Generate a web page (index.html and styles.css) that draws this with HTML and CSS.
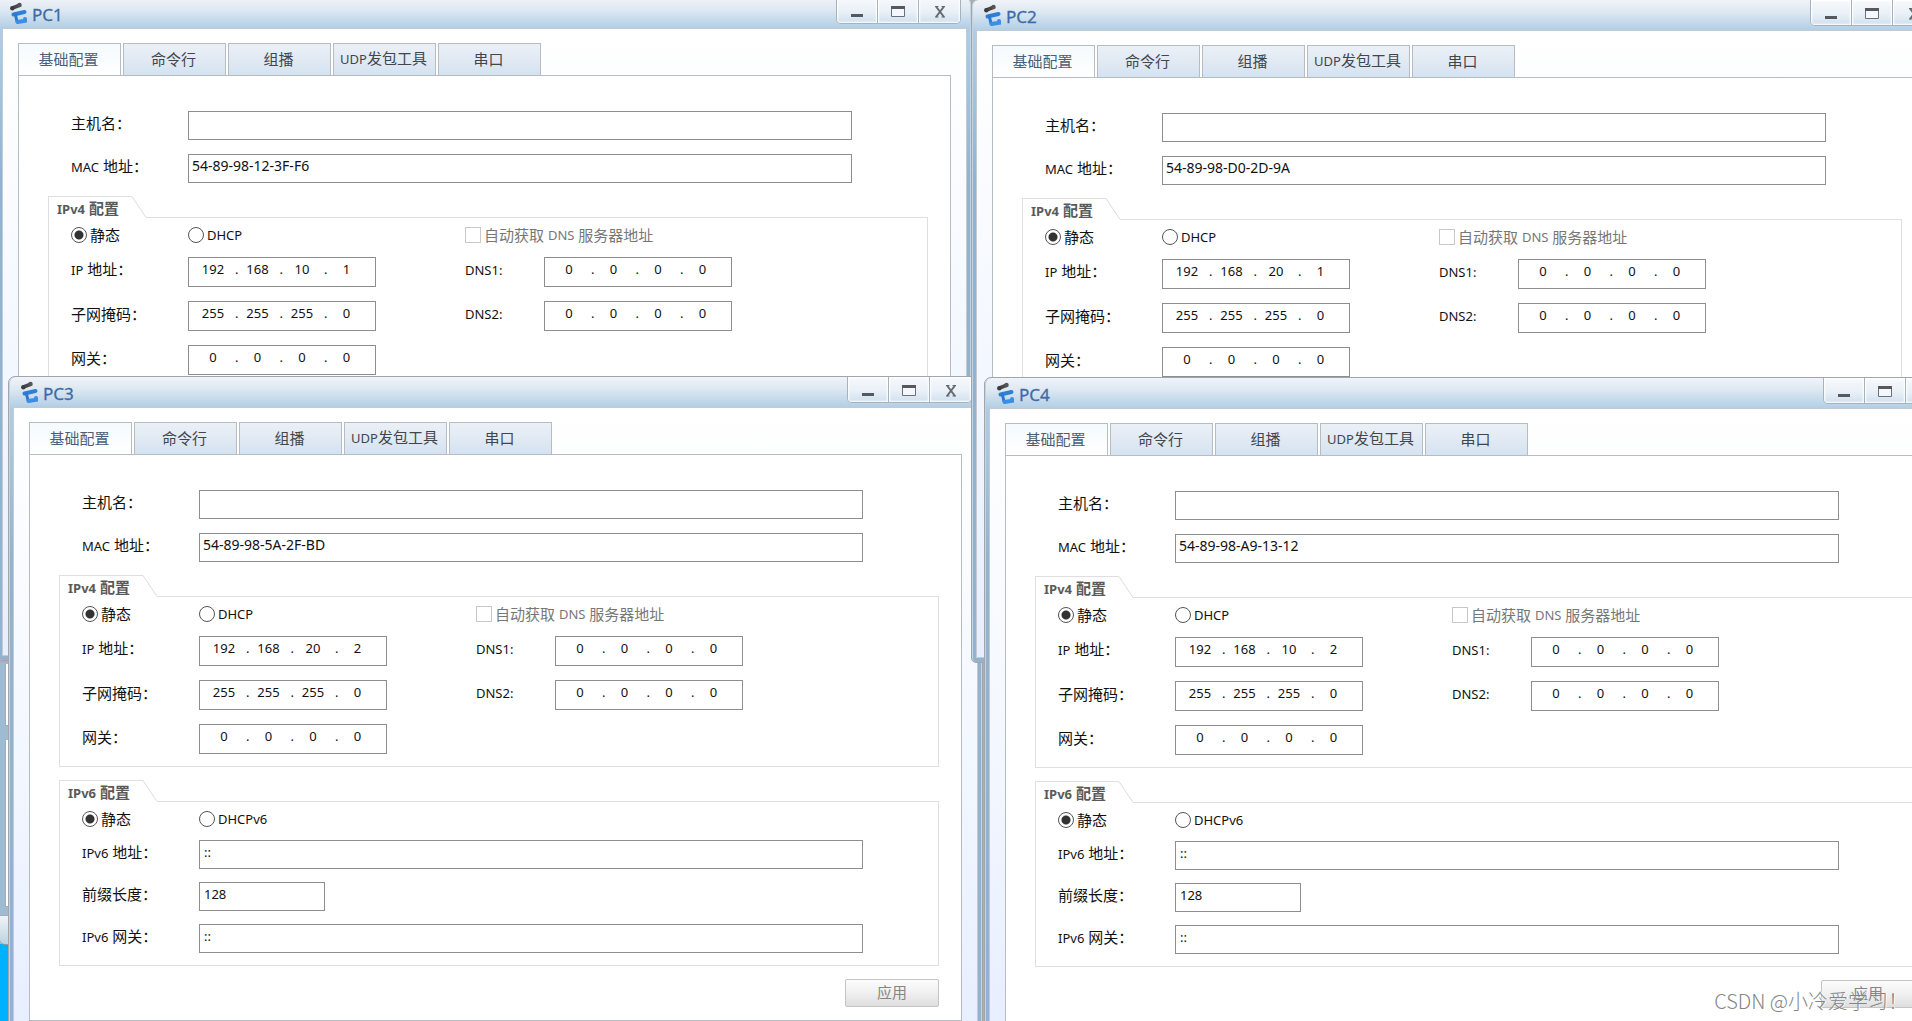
FILE: index.html
```html
<!DOCTYPE html>
<html lang="zh-CN">
<head>
<meta charset="utf-8">
<title>PC</title>
<link rel="stylesheet" href="styles.css">
</head>
<body>
<svg class="defs" aria-hidden="true">
  <symbol id="logo" viewBox="0 0 20 23">
    <g fill="none" stroke-linecap="round">
      <path d="M3.500 6 L10.500 3.300" stroke="#484848" stroke-width="3.600"/>
      <circle cx="3.300" cy="6.300" r="2.200" fill="#3c3c3c"/>
      <circle cx="10.500" cy="3" r="2.200" fill="#555"/>
      <path d="M4.500 12.500 L15.500 10" stroke="#2f7fd6" stroke-width="4"/>
      <path d="M6.500 13 L8 19.500" stroke="#2a78cf" stroke-width="3"/>
      <path d="M8.500 20 L16 18.800 L16 17" stroke="#3a8ee6" stroke-width="4"/>
    </g>
  </symbol>
  <symbol id="slope" viewBox="0 0 14 22"><path d="M0 .5 L14 21.500" fill="none" stroke="#dcdcdc"/></symbol>
  <symbol id="min" viewBox="0 0 14 14"><path d="M1 9h12v3H1z" fill="#55585e"/></symbol>
  <symbol id="max" viewBox="0 0 14 14"><path d="M.5 1.500h13v10H.5z" fill="#f4f8fc" stroke="#6c7076"/><path d="M0 1h14v3H0z" fill="#55585e"/></symbol>
  <symbol id="close" viewBox="0 0 14 14"><path d="M3 1.500L11 12M11 1.500L3 12" stroke="#66696e" stroke-width="2"/><path d="M2 1.500h3.500M8.500 1.500H12M2 12h3.500M8.500 12H12" stroke="#66696e"/></symbol>
</svg>
<main class="desktop">
  <div class="back"><div class="back-pane"></div><div class="back-pane back-pane-tall"></div><div class="back-foot"></div></div>

  <section class="window pc1" aria-label="PC1">
    <header class="titlebar">
      <svg class="logo"><use href="#logo"/></svg><h2 class="title">PC1</h2>
      <div class="controls"><button aria-label="最小化"><svg><use href="#min"/></svg></button><button aria-label="最大化"><svg><use href="#max"/></svg></button><button aria-label="关闭"><svg><use href="#close"/></svg></button></div>
    </header>
    <div class="client">
      <nav class="tabs"><button class="tab active">基础配置</button><button class="tab">命令行</button><button class="tab">组播</button><button class="tab"><span class="latin">UDP</span>发包工具</button><button class="tab">串口</button></nav>
      <div class="panel">
        <div class="field top"><label for="h1">主机名：</label><input id="h1" class="box" type="text"></div>
        <div class="field top"><label for="m1"><span class="latin">MAC</span> 地址：</label><input id="m1" class="box" type="text" value="54-89-98-12-3F-F6"></div>
        <fieldset class="group">
          <legend class="group-head"><span class="group-tab"><span class="latin">IPv4</span> 配置</span><svg class="slope"><use href="#slope"/></svg><span class="group-line"></span></legend>
          <div class="group-body">
            <div class="grid radios"><label class="choice"><input type="radio" name="v4-1" checked>静态</label><label class="choice"><input type="radio" name="v4-1"><span class="latin">DHCP</span></label><label class="choice auto"><input type="checkbox" disabled>自动获取 <span class="latin">DNS</span> 服务器地址</label></div>
            <div class="grid"><label for="ip1"><span class="latin">IP</span> 地址：</label><div class="box ip"><input id="ip1" value="192">.<input aria-label="IP 2" value="168">.<input aria-label="IP 3" value="10">.<input aria-label="IP 4" value="1"></div><label for="da1" class="latin">DNS1:</label><div class="box ip"><input id="da1" value="0">.<input aria-label="DNS1 2" value="0">.<input aria-label="DNS1 3" value="0">.<input aria-label="DNS1 4" value="0"></div></div>
            <div class="grid"><label for="mk1">子网掩码：</label><div class="box ip"><input id="mk1" value="255">.<input aria-label="掩码 2" value="255">.<input aria-label="掩码 3" value="255">.<input aria-label="掩码 4" value="0"></div><label for="db1" class="latin">DNS2:</label><div class="box ip"><input id="db1" value="0">.<input aria-label="DNS2 2" value="0">.<input aria-label="DNS2 3" value="0">.<input aria-label="DNS2 4" value="0"></div></div>
            <div class="grid"><label for="gw1">网关：</label><div class="box ip"><input id="gw1" value="0">.<input aria-label="网关 2" value="0">.<input aria-label="网关 3" value="0">.<input aria-label="网关 4" value="0"></div></div>
          </div>
        </fieldset>
      </div>
    </div>
  </section>

  <section class="window pc3" aria-label="PC3">
    <header class="titlebar">
      <svg class="logo"><use href="#logo"/></svg><h2 class="title">PC3</h2>
      <div class="controls"><button aria-label="最小化"><svg><use href="#min"/></svg></button><button aria-label="最大化"><svg><use href="#max"/></svg></button><button aria-label="关闭"><svg><use href="#close"/></svg></button></div>
    </header>
    <div class="client">
      <nav class="tabs"><button class="tab active">基础配置</button><button class="tab">命令行</button><button class="tab">组播</button><button class="tab"><span class="latin">UDP</span>发包工具</button><button class="tab">串口</button></nav>
      <div class="panel">
        <div class="field top"><label for="h3">主机名：</label><input id="h3" class="box" type="text"></div>
        <div class="field top"><label for="m3"><span class="latin">MAC</span> 地址：</label><input id="m3" class="box" type="text" value="54-89-98-5A-2F-BD"></div>
        <fieldset class="group">
          <legend class="group-head"><span class="group-tab"><span class="latin">IPv4</span> 配置</span><svg class="slope"><use href="#slope"/></svg><span class="group-line"></span></legend>
          <div class="group-body">
            <div class="grid radios"><label class="choice"><input type="radio" name="v4-3" checked>静态</label><label class="choice"><input type="radio" name="v4-3"><span class="latin">DHCP</span></label><label class="choice auto"><input type="checkbox" disabled>自动获取 <span class="latin">DNS</span> 服务器地址</label></div>
            <div class="grid"><label for="ip3"><span class="latin">IP</span> 地址：</label><div class="box ip"><input id="ip3" value="192">.<input aria-label="IP 2" value="168">.<input aria-label="IP 3" value="20">.<input aria-label="IP 4" value="2"></div><label for="da3" class="latin">DNS1:</label><div class="box ip"><input id="da3" value="0">.<input aria-label="DNS1 2" value="0">.<input aria-label="DNS1 3" value="0">.<input aria-label="DNS1 4" value="0"></div></div>
            <div class="grid"><label for="mk3">子网掩码：</label><div class="box ip"><input id="mk3" value="255">.<input aria-label="掩码 2" value="255">.<input aria-label="掩码 3" value="255">.<input aria-label="掩码 4" value="0"></div><label for="db3" class="latin">DNS2:</label><div class="box ip"><input id="db3" value="0">.<input aria-label="DNS2 2" value="0">.<input aria-label="DNS2 3" value="0">.<input aria-label="DNS2 4" value="0"></div></div>
            <div class="grid"><label for="gw3">网关：</label><div class="box ip"><input id="gw3" value="0">.<input aria-label="网关 2" value="0">.<input aria-label="网关 3" value="0">.<input aria-label="网关 4" value="0"></div></div>
          </div>
        </fieldset>
        <fieldset class="group">
          <legend class="group-head"><span class="group-tab"><span class="latin">IPv6</span> 配置</span><svg class="slope"><use href="#slope"/></svg><span class="group-line"></span></legend>
          <div class="group-body v6">
            <div class="grid"><label class="choice"><input type="radio" name="v6-3" checked>静态</label><label class="choice"><input type="radio" name="v6-3"><span class="latin">DHCPv6</span></label></div>
            <div class="field"><label for="a3"><span class="latin">IPv6</span> 地址：</label><input id="a3" class="box" type="text" value="::"></div>
            <div class="field"><label for="p3">前缀长度：</label><input id="p3" class="box short" type="text" value="128"></div>
            <div class="field"><label for="g3"><span class="latin">IPv6</span> 网关：</label><input id="g3" class="box" type="text" value="::"></div>
          </div>
        </fieldset>
        <div class="actions"><button class="apply">应用</button></div>
      </div>
    </div>
  </section>

  <section class="window pc2" aria-label="PC2">
    <header class="titlebar">
      <svg class="logo"><use href="#logo"/></svg><h2 class="title">PC2</h2>
      <div class="controls"><button aria-label="最小化"><svg><use href="#min"/></svg></button><button aria-label="最大化"><svg><use href="#max"/></svg></button><button aria-label="关闭"><svg><use href="#close"/></svg></button></div>
    </header>
    <div class="client">
      <nav class="tabs"><button class="tab active">基础配置</button><button class="tab">命令行</button><button class="tab">组播</button><button class="tab"><span class="latin">UDP</span>发包工具</button><button class="tab">串口</button></nav>
      <div class="panel">
        <div class="field top"><label for="h2">主机名：</label><input id="h2" class="box" type="text"></div>
        <div class="field top"><label for="m2"><span class="latin">MAC</span> 地址：</label><input id="m2" class="box" type="text" value="54-89-98-D0-2D-9A"></div>
        <fieldset class="group">
          <legend class="group-head"><span class="group-tab"><span class="latin">IPv4</span> 配置</span><svg class="slope"><use href="#slope"/></svg><span class="group-line"></span></legend>
          <div class="group-body">
            <div class="grid radios"><label class="choice"><input type="radio" name="v4-2" checked>静态</label><label class="choice"><input type="radio" name="v4-2"><span class="latin">DHCP</span></label><label class="choice auto"><input type="checkbox" disabled>自动获取 <span class="latin">DNS</span> 服务器地址</label></div>
            <div class="grid"><label for="ip2"><span class="latin">IP</span> 地址：</label><div class="box ip"><input id="ip2" value="192">.<input aria-label="IP 2" value="168">.<input aria-label="IP 3" value="20">.<input aria-label="IP 4" value="1"></div><label for="da2" class="latin">DNS1:</label><div class="box ip"><input id="da2" value="0">.<input aria-label="DNS1 2" value="0">.<input aria-label="DNS1 3" value="0">.<input aria-label="DNS1 4" value="0"></div></div>
            <div class="grid"><label for="mk2">子网掩码：</label><div class="box ip"><input id="mk2" value="255">.<input aria-label="掩码 2" value="255">.<input aria-label="掩码 3" value="255">.<input aria-label="掩码 4" value="0"></div><label for="db2" class="latin">DNS2:</label><div class="box ip"><input id="db2" value="0">.<input aria-label="DNS2 2" value="0">.<input aria-label="DNS2 3" value="0">.<input aria-label="DNS2 4" value="0"></div></div>
            <div class="grid"><label for="gw2">网关：</label><div class="box ip"><input id="gw2" value="0">.<input aria-label="网关 2" value="0">.<input aria-label="网关 3" value="0">.<input aria-label="网关 4" value="0"></div></div>
          </div>
        </fieldset>
      </div>
    </div>
  </section>

  <section class="window pc4" aria-label="PC4">
    <header class="titlebar">
      <svg class="logo"><use href="#logo"/></svg><h2 class="title">PC4</h2>
      <div class="controls"><button aria-label="最小化"><svg><use href="#min"/></svg></button><button aria-label="最大化"><svg><use href="#max"/></svg></button><button aria-label="关闭"><svg><use href="#close"/></svg></button></div>
    </header>
    <div class="client">
      <nav class="tabs"><button class="tab active">基础配置</button><button class="tab">命令行</button><button class="tab">组播</button><button class="tab"><span class="latin">UDP</span>发包工具</button><button class="tab">串口</button></nav>
      <div class="panel">
        <div class="field top"><label for="h4">主机名：</label><input id="h4" class="box" type="text"></div>
        <div class="field top"><label for="m4"><span class="latin">MAC</span> 地址：</label><input id="m4" class="box" type="text" value="54-89-98-A9-13-12"></div>
        <fieldset class="group">
          <legend class="group-head"><span class="group-tab"><span class="latin">IPv4</span> 配置</span><svg class="slope"><use href="#slope"/></svg><span class="group-line"></span></legend>
          <div class="group-body">
            <div class="grid radios"><label class="choice"><input type="radio" name="v4-4" checked>静态</label><label class="choice"><input type="radio" name="v4-4"><span class="latin">DHCP</span></label><label class="choice auto"><input type="checkbox" disabled>自动获取 <span class="latin">DNS</span> 服务器地址</label></div>
            <div class="grid"><label for="ip4"><span class="latin">IP</span> 地址：</label><div class="box ip"><input id="ip4" value="192">.<input aria-label="IP 2" value="168">.<input aria-label="IP 3" value="10">.<input aria-label="IP 4" value="2"></div><label for="da4" class="latin">DNS1:</label><div class="box ip"><input id="da4" value="0">.<input aria-label="DNS1 2" value="0">.<input aria-label="DNS1 3" value="0">.<input aria-label="DNS1 4" value="0"></div></div>
            <div class="grid"><label for="mk4">子网掩码：</label><div class="box ip"><input id="mk4" value="255">.<input aria-label="掩码 2" value="255">.<input aria-label="掩码 3" value="255">.<input aria-label="掩码 4" value="0"></div><label for="db4" class="latin">DNS2:</label><div class="box ip"><input id="db4" value="0">.<input aria-label="DNS2 2" value="0">.<input aria-label="DNS2 3" value="0">.<input aria-label="DNS2 4" value="0"></div></div>
            <div class="grid"><label for="gw4">网关：</label><div class="box ip"><input id="gw4" value="0">.<input aria-label="网关 2" value="0">.<input aria-label="网关 3" value="0">.<input aria-label="网关 4" value="0"></div></div>
          </div>
        </fieldset>
        <fieldset class="group">
          <legend class="group-head"><span class="group-tab"><span class="latin">IPv6</span> 配置</span><svg class="slope"><use href="#slope"/></svg><span class="group-line"></span></legend>
          <div class="group-body v6">
            <div class="grid"><label class="choice"><input type="radio" name="v6-4" checked>静态</label><label class="choice"><input type="radio" name="v6-4"><span class="latin">DHCPv6</span></label></div>
            <div class="field"><label for="a4"><span class="latin">IPv6</span> 地址：</label><input id="a4" class="box" type="text" value="::"></div>
            <div class="field"><label for="p4">前缀长度：</label><input id="p4" class="box short" type="text" value="128"></div>
            <div class="field"><label for="g4"><span class="latin">IPv6</span> 网关：</label><input id="g4" class="box" type="text" value="::"></div>
          </div>
        </fieldset>
        <div class="actions"><button class="apply">应用</button></div>
      </div>
    </div>
  </section>

  <p class="watermark">CSDN @小冷爱学习！</p>
</main>
</body>
</html>
```

FILE: styles.css
```css
* { box-sizing: border-box; }

body {
  margin: 0;
  font: 15px/18px "Noto Sans", "Noto Sans CJK SC", sans-serif;
  color: #111;
}

button, input { font: inherit; color: inherit; margin: 0; padding: 0; }
.defs { position: absolute; width: 0; height: 0; }
.latin { font-size: 13px; }

.desktop {
  position: relative;
  height: 100vh;
  overflow: hidden;
  background: linear-gradient(#00b1ff, #00b1ff) 0 944px / 8px 100% no-repeat #a4b1bb;
}

/* Edge of a window that lies behind the four dialogs */
.back {
  position: absolute;
  left: 0;
  top: 662px;
  width: 8px;
  height: 282px;
  padding-top: 1px;
  background: #9dbcd4;
  border-top: 1px solid #aab4bc;
}
.back-pane {
  height: 62px;
  margin: 0 0 14px 5px;
  background: #fff;
  border: solid #a3adb5;
  border-width: 0 0 1px 1px;
}
.back-pane-tall { height: 167px; margin-bottom: 8px; }
.back-foot {
  height: 30px;
  background: linear-gradient(#eef4f8, #bdd3df);
  border-top: 1px solid #a3adb5;
  border-bottom: 1px solid #9a9a9a;
  border-bottom-left-radius: 5px;
}

/* Windows */
.window {
  position: absolute;
  display: flex;
  flex-direction: column;
  width: 51%;
  min-height: 664px;
  padding: 0 4px 4px;
  border: 1px solid #a2a6aa;
  border-radius: 7px 7px 5px 5px;
  background: linear-gradient(#f1f3f9, #dde8f2 12px, #b0cde5 31px, #92b3cf 180px);
  box-shadow: inset 1px 0 #c3d3df, inset -1px 0 #c3d3df;
}
.pc1 { left: -3px; top: -3px; }
.pc2 { left: 971px; top: -1px; }
.pc3 { left: 8px; top: 376px; }
.pc4 { left: 984px; top: 377px; }

.titlebar {
  display: flex;
  align-items: flex-start;
  height: 30px;
  padding: 4px 6px 0 7px;
}
.logo { width: 20px; height: 23px; }
.title {
  flex: 1;
  margin: 3px 0 0 3px;
  font-size: 17px;
  line-height: 20px;
  font-weight: 400;
  color: #3c6ba5;
  -webkit-text-stroke: 0.300px #3c6ba5;
}
.controls {
  display: flex;
  margin-top: -4px;
  border: 1px solid #a8b2bb;
  border-top: 0;
  border-radius: 0 0 5px 5px;
  overflow: hidden;
}
.controls button {
  width: 41px;
  height: 25px;
  border: 0;
  border-right: 1px solid #a8b2bb;
  background: linear-gradient(#f7f9fc, #e9f0f7 14px, #cfe0ef);
  box-shadow: inset 0 0 2px 1px #fff;
}
.controls button:last-child { border-right: 0; }
.controls svg { display: block; width: 14px; height: 14px; margin: 3px auto 0; }

.client {
  flex: 1;
  display: flex;
  flex-direction: column;
  padding: 14px 15px;
  border: 1px solid #c3cad0;
  background: linear-gradient(#fff, #f3f7ff 55%, #e7eeff);
}

.tabs { display: flex; gap: 2px; }
.tab {
  width: 103px;
  height: 32px;
  padding: 0 2px 2px 0;
  border: 1px solid #b7bcc1;
  border-bottom: 0;
  background: linear-gradient(#ebf0f7, #e0e9f3 55%, #d4e2f1);
  color: #41464c;
}
.tab.active { background: linear-gradient(#f4fafd, #fff); color: #4a5f75; }

.panel {
  flex: 1;
  padding: 35px 22px 13px 29px;
  border: 1px solid #b7bcc1;
  background: #fff;
}

/* Form rows */
.field {
  display: flex;
  align-items: center;
  padding-right: 75px;
  margin-bottom: 13px;
}
.field.top { margin-bottom: 14px; padding: 0 76px 0 23px; }
.field.top + .field.top { margin-bottom: 13px; }
.field label, .grid > label { padding-bottom: 5px; white-space: pre; }
.field label { width: 117px; }

.box {
  flex: 1;
  min-width: 0;
  height: 29px;
  padding: 0 4px 6px;
  border: 1px solid #8e8e8e;
  border-radius: 0;
  background: #fff;
  font-size: 13px;
}
.box.short { flex: 0 0 126px; }
.top .box { font-size: 14px; padding-left: 3px; }

.box.ip {
  display: flex;
  align-items: center;
  gap: 3px;
  height: 30px;
  padding: 0 0 7px 8px;
}
.ip input {
  width: 35px;
  padding-right: 3px;
  border: 0;
  background: none;
  text-align: center;
  line-height: 18px;
}

.group { min-width: 0; margin: 0 0 13px; padding: 0; border: 0; }
.group-head { display: flex; width: 100%; height: 22px; padding: 0; }
.group-tab {
  width: 84px;
  padding: 2px 0 0 8px;
  border: solid #dfdfdf;
  border-width: 1px 0 0 1px;
  font-weight: 700;
  color: #5a5a5a;
}
.slope { width: 14px; height: 22px; }
.group-line { flex: 1; border-bottom: 1px solid #dfdfdf; }
.group-body {
  display: flex;
  flex-direction: column;
  gap: 14px;
  padding: 9px 0 12px 22px;
  border: 1px solid #dfdfdf;
  border-top: 0;
}
.group-body.v6 { gap: 13px; }
.v6 .field { margin: 0; }

.grid {
  display: grid;
  grid-template-columns: 117px 277px 79px 188px;
  align-items: center;
}
.grid .box.ip { width: 188px; }
.grid > .choice {
  display: flex;
  align-items: center;
  height: 16px;
  padding: 0;
}
.grid > .auto { grid-column: 3 / span 2; color: #777; }
.choice input {
  appearance: none;
  flex: none;
  width: 16px;
  height: 16px;
  margin-right: 3px;
  border: 1px solid #555;
  border-radius: 50%;
  background: #fff;
}
.choice input:checked { background: radial-gradient(#333 4px, #fff 5px); }
.choice input[type="checkbox"] { border-color: #c8c8c8; border-radius: 0; }

.actions { display: flex; justify-content: flex-end; }
.apply {
  width: 94px;
  height: 28px;
  padding-bottom: 2px;
  border: 1px solid #c4c4c4;
  border-radius: 2px;
  background: linear-gradient(#fcfcfc, #f0f0f0 50%, #dedede);
  color: #858585;
}

.watermark {
  position: absolute;
  right: 4px;
  bottom: 8px;
  margin: 0;
  font: 300 20px/24px "Noto Sans CJK SC", sans-serif;
  color: #858585;
  text-shadow: 1px 0 #fff;
}
```
